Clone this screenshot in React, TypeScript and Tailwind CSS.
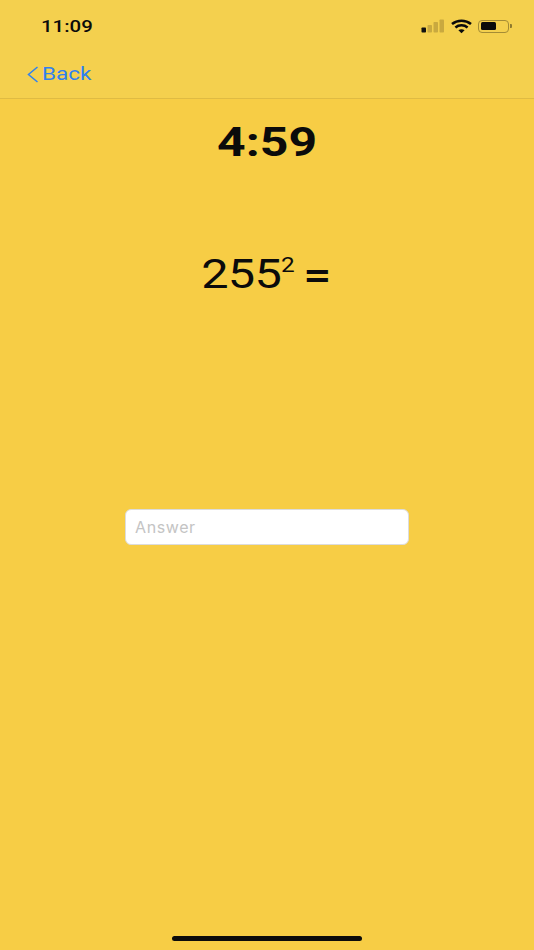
const font = "font-['Roboto','Liberation_Sans',Arial,sans-serif]";

function StatusIcons() {
  return (
    <div className="flex items-center">
      <svg width="24" height="16" viewBox="0 0 24 16" className="mr-[6px]">
        <rect x="0.5" y="9.5" width="4.5" height="5" rx="0.8" fill="#111" />
        <rect x="6.5" y="7" width="4.5" height="7.5" rx="0.8" fill="#c9a93f" />
        <rect x="12.5" y="4" width="4.5" height="10.5" rx="0.8" fill="#c9a93f" />
        <rect x="18.5" y="1.5" width="4.5" height="13" rx="0.8" fill="#c9a93f" />
      </svg>
      <svg width="21" height="15" viewBox="0 0 21 15" fill="none" stroke="#0b0b0b" strokeWidth="2.6" className="mr-[6px]">
        <path d="M1 5C6.4 0.6 14.6 0.6 20 5" />
        <path d="M4.4 8.4C7.9 5.6 13.1 5.6 16.6 8.4" />
        <path d="M10.5 14.2L7.4 11.2C9.2 9.9 11.8 9.9 13.6 11.2Z" fill="#0b0b0b" stroke="none" />
      </svg>
      <div className="flex items-center">
        <div className="w-[31px] h-[13px] rounded-[4px] border-[1.5px] border-[#a48c35] p-[1.5px]">
          <div className="w-[15px] h-full rounded-[1.5px] bg-[#0b0b0b]" />
        </div>
        <div className="ml-[1px] w-[2px] h-[4px] rounded-r-[1px] bg-[#8f7a2e]" />
      </div>
    </div>
  );
}

export default function App() {
  return (
    <div className={`${font} w-[534px] h-[950px] flex flex-col bg-[#f7cd45] overflow-hidden`}>
      <header className="h-[99px] bg-[#f4d04e] border-b border-[#dfbb43] flex flex-col">
        <div className="h-[52px] pl-[41px] pr-[22px] flex items-center justify-between">
          <span className="text-[17px] leading-none font-medium text-[#0b0b0b] origin-left scale-x-[1.2] pt-[1px]">11:09</span>
          <StatusIcons />
        </div>
        <div className="flex items-center pl-[27px] h-[44px] pt-[1px]">
          <svg width="12" height="17" viewBox="0 0 12 17" fill="none" stroke="#2f80f0" strokeWidth="1.5" className="mr-[3px]">
            <path d="M10.5 1L1.5 8.5L10.5 16" />
          </svg>
          <span className="text-[18.5px] leading-none text-[#2f80f0] origin-left scale-x-[1.217]">Back</span>
        </div>
      </header>

      <main className="flex-1 flex flex-col items-center">
        <div className="mt-[20px] text-[41px] leading-[46px] font-bold text-[#0b0b0b] scale-x-[1.217]">4:59</div>
        <div className="mt-[87px] text-[40px] leading-[46px] text-[#0b0b0b] scale-x-[1.217] flex items-start pr-[2px]">
          <span className="tracking-[-0.6px]">255</span>
          <span className="text-[20px] leading-[20px] mt-[3px]">2</span>
          <span className="ml-[7px] font-medium text-[41px]">=</span>
        </div>
        <input
          placeholder="Answer"
          readOnly
          className="mt-[211px] w-[284px] h-[36px] rounded-[6px] bg-white border border-[#dcdcdc] pl-[9px] text-[16px] font-['Inter',sans-serif] text-[#333] outline-none placeholder:text-[#c4c4c4] tracking-[0.6px]"
        />
      </main>

      <div className="h-[14px] flex justify-center">
        <div className="w-[190px] h-[5px] rounded-full bg-[#0b0b0b]" />
      </div>
    </div>
  );
}
